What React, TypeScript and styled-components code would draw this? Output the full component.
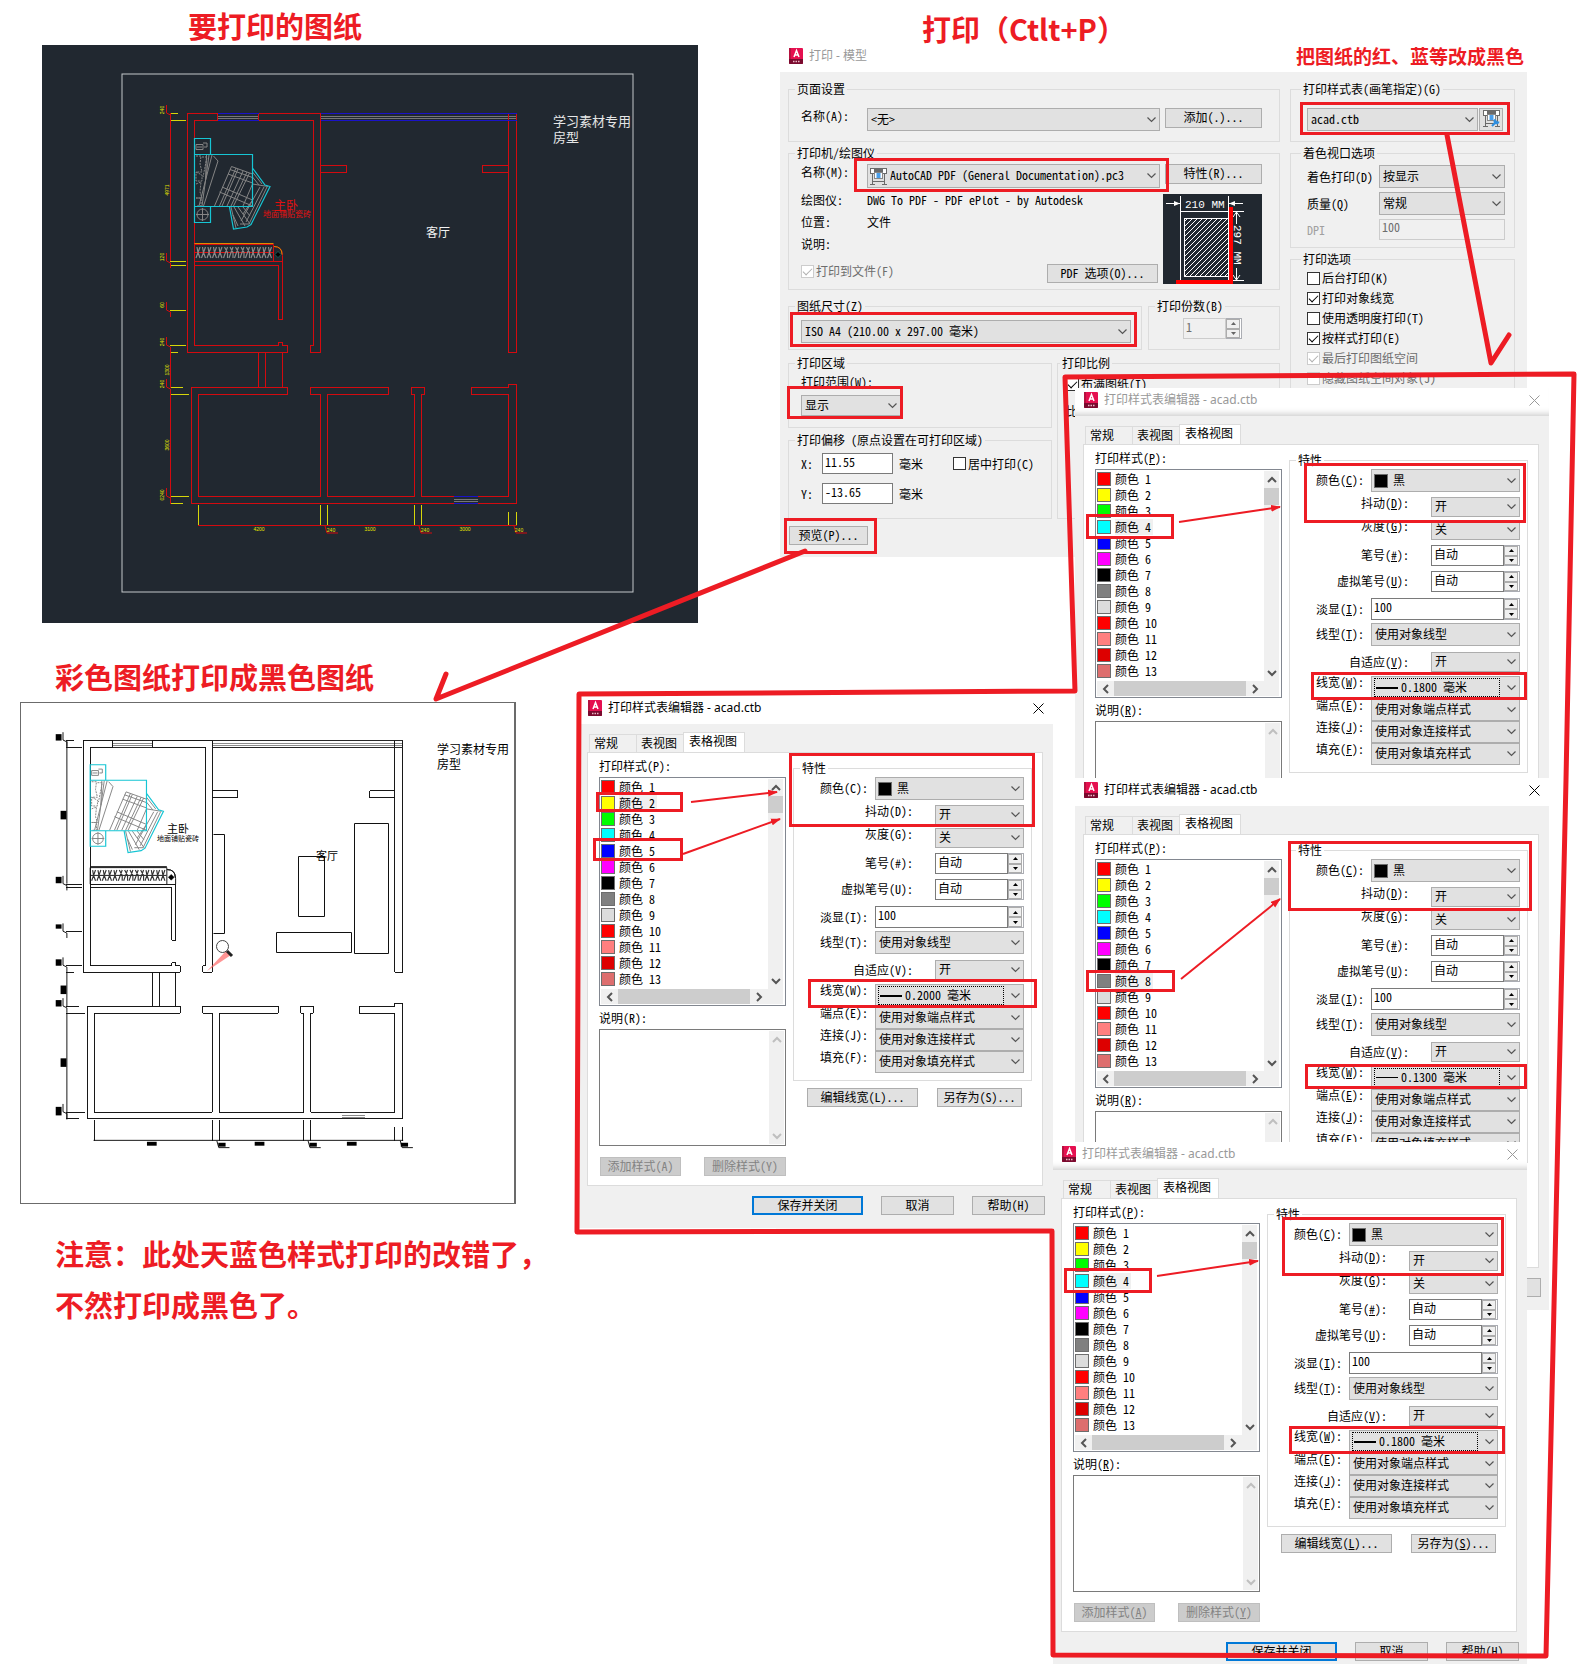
import React, { useId } from "react";
import styled, { createGlobalStyle, css } from "styled-components";

const cjk = `"Noto Sans CJK SC", sans-serif`;
const dialogFont = `"Noto Sans Mono CJK SC", ${cjk}`;
const RED = "#ed1c24";

const GlobalStyle = createGlobalStyle`
  *, *::before, *::after { box-sizing: border-box; }
  body { margin: 0; background: #fff; }
  button, input, select, textarea { font: inherit; color: inherit; margin: 0; border-radius: 0; }
`;

/* ---------- canvas ---------- */

const Board = styled.main`
  position: relative;
  width: 100%;
  height: max(100vh, 1664px);
  overflow: hidden;
  background: #fff;
  font-family: ${dialogFont};
  font-size: 12px;
  line-height: 14px;
  color: #000;
`;

const DrawingColumn = styled.section`
  display: flex;
  flex-direction: column;
  align-items: flex-start;
  padding-top: 7px;
`;

const Heading = styled.h2<{ $size?: number }>`
  margin: 0;
  font-family: ${cjk};
  font-size: ${(p) => p.$size ?? 29}px;
  font-weight: 700;
  line-height: 36px;
  color: ${RED};
  white-space: nowrap;
`;

const TopHeading = styled(Heading)`
  padding-left: 188px;
`;

const ResultHeading = styled(Heading)`
  margin-top: 35px;
  padding-left: 55px;
`;

const FloatingHeading = styled(Heading)<{ $x: number; $y: number }>`
  position: absolute;
  left: ${(p) => p.$x}px;
  top: ${(p) => p.$y}px;
`;

const Warning = styled.p`
  margin: 24px 0 0 55px;
  font-family: ${cjk};
  font-size: 29px;
  font-weight: 700;
  line-height: 51px;
  color: ${RED};
`;

const ModelSpace = styled.figure`
  margin: 2px 0 0 42px;
  width: 656px;
  background: #212830;
  svg { display: block; }
`;

const PaperSpace = styled.figure`
  margin: 8px 0 0 20px;
  width: 496px;
  border: 1px solid #6b6b6b;
  border-right-width: 2px;
  svg { display: block; }
`;

const Overlay = styled.svg`
  position: absolute;
  left: 0;
  top: 0;
  pointer-events: none;
`;

/* ---------- windows ---------- */

const WindowFrame = styled.section<{ $x: number; $y: number; $w: number; $visible?: number }>`
  position: absolute;
  left: ${(p) => p.$x}px;
  top: ${(p) => p.$y}px;
  width: ${(p) => p.$w}px;
  display: flex;
  flex-direction: column;
  background: #f0f0f0;
  ${(p) => p.$visible && css`max-height: ${p.$visible}px; overflow: hidden;`}
`;

const TitleBar = styled.header<{ $inactive?: boolean; $shadow?: boolean }>`
  display: flex;
  flex: none;
  align-items: center;
  gap: 6px;
  height: 28px;
  padding: 0 9px 4px;
  background: #fff;
  color: ${(p) => (p.$inactive ? "#999" : "#000")};
  font-family: "Noto Sans", ${cjk};
  font-size: 12px;
  ${(p) => p.$shadow && css`box-shadow: inset 0 -8px 6px -6px #ccc;`}
`;

const TitleText = styled.h3`
  flex: 1;
  margin: 0;
  font-size: 12px;
  font-weight: 400;
  line-height: 16px;
`;

const CloseButton = styled.button`
  display: flex;
  padding: 0;
  border: 0;
  background: none;
`;

/* ---------- controls ---------- */

const Button = styled.button<{ $w?: number; $h?: number; $primary?: boolean }>`
  flex: none;
  width: ${(p) => (p.$w ? `${p.$w}px` : "auto")};
  height: ${(p) => p.$h ?? 19}px;
  padding: 0 0 2px;
  border: ${(p) => (p.$primary ? "2px solid #0078d7" : "1px solid #adadad")};
  background: #e1e1e1;
  line-height: 14px;
  white-space: nowrap;
  &:disabled {
    background: #ccc;
    border-color: #bfbfbf;
    color: #838383;
  }
`;

const SelectWrap = styled.span<{ $w?: number; $h: number }>`
  position: relative;
  display: block;
  flex: none;
  width: ${(p) => (p.$w ? `${p.$w}px` : "100%")};
  height: ${(p) => p.$h}px;
`;

const NativeSelect = styled.select<{ $indent: number }>`
  appearance: none;
  display: block;
  width: 100%;
  height: 100%;
  padding: 0 18px 2px ${(p) => p.$indent}px;
  border: 1px solid #adadad;
  background: #e1e1e1;
  line-height: 14px;
`;

const SelectChevron = styled.svg`
  position: absolute;
  right: 4px;
  top: 50%;
  margin-top: -3px;
  pointer-events: none;
`;

const SelectAdornment = styled.span`
  position: absolute;
  inset: 2px 20px 2px 3px;
  display: flex;
  align-items: center;
  pointer-events: none;
`;

const FocusRing = styled(SelectAdornment)`
  border: 1px dotted #000;
`;

const Swatch = styled.span<{ $color: string }>`
  flex: none;
  width: 14px;
  height: 14px;
  border: 1px solid #6d6d6d;
  background: ${(p) => p.$color};
`;

const StrokeSample = styled.span<{ $weight: number }>`
  width: 22px;
  height: ${(p) => p.$weight}px;
  margin-left: 1px;
  background: #000;
`;

const TextInput = styled.input<{ $w?: number; $h?: number; $top?: boolean }>`
  display: block;
  min-width: 0;
  flex: ${(p) => (p.$w ? "none" : "1")};
  width: ${(p) => (p.$w ? `${p.$w}px` : "auto")};
  height: ${(p) => p.$h ?? 21}px;
  padding: 0 2px ${(p) => (p.$top ? 6 : 4)}px 2px;
  border: 1px solid #7a7a7a;
  background: #fff;
  line-height: 14px;
  &:disabled {
    border-color: #ccc;
    background: #f0f0f0;
    color: #6d6d6d;
  }
`;

const SpinWrap = styled.span<{ $w: number }>`
  display: flex;
  flex: none;
  width: ${(p) => p.$w}px;
`;

const SpinButtons = styled.span`
  display: flex;
  flex-direction: column;
  width: 16px;
  padding: 0 1px 0 0;
  border: 1px solid #abadb3;
  border-left: 0;
  background: #fff;
`;

const SpinButton = styled.button`
  flex: 1;
  display: flex;
  align-items: center;
  justify-content: center;
  padding: 0;
  border: 1px solid #adadad;
  background: #f0f0f0;
`;

const CheckLabel = styled.label<{ $disabled?: boolean }>`
  display: flex;
  align-items: center;
  gap: 2px;
  height: 14px;
  white-space: nowrap;
  color: ${(p) => (p.$disabled ? "#6d6d6d" : "#000")};
`;

const CheckBox = styled.input`
  appearance: none;
  flex: none;
  width: 13px;
  height: 13px;
  border: 1px solid #333;
  background: #fff;
  &:checked::after {
    content: "";
    display: block;
    width: 9px;
    height: 5px;
    margin: 2px 0 0 1px;
    border-left: 1px solid currentColor;
    border-bottom: 1px solid currentColor;
    transform: rotate(-45deg);
  }
  &:disabled {
    border-color: #ccc;
    color: #b0b0b0;
  }
`;

const Group = styled.fieldset<{ $pad: string; $mt?: number; $w?: number; $grow?: boolean }>`
  min-width: 0;
  margin: ${(p) => p.$mt ?? 0}px 0 0;
  padding: ${(p) => p.$pad};
  border: 1px solid #dcdcdc;
  ${(p) => p.$w && css`width: ${p.$w}px; flex: none;`}
  ${(p) => p.$grow && css`flex: 1;`}
`;

const Legend = styled.legend`
  margin-left: -6px;
  padding: 0 2px;
  line-height: 14px;
  white-space: nowrap;
`;

/* ---------- drawings ---------- */

const AppIcon = () => (
  <svg width="14" height="16" viewBox="0 0 14 16" aria-hidden="true">
    <rect x="0" y="0" width="14" height="16" rx="1" fill="#e51050" />
    <path d="M0 0h2v11h-2z" fill="#b5123f" />
    <path d="M0 11h14v4a1 1 0 0 1-1 1h-12a1 1 0 0 1-1-1z" fill="#7a0a2e" />
    <path d="M5 9 7.500 2.500 10 9M6 7h3" fill="none" stroke="#fff" strokeWidth="1.500" />
    <path d="M4 13.500h1.500M6.500 13.500h1.500M9 13.500h1.500" stroke="#e9b9c6" strokeWidth="1.500" />
  </svg>
);

const CloseIcon = () => (
  <svg width="11" height="11" viewBox="0 0 11 11" aria-hidden="true">
    <path d="M.5.5l10 10M10.500.5l-10 10" stroke="currentColor" fill="none" />
  </svg>
);

const PlotterIcon = ({ edit = false }: { edit?: boolean }) => (
  <svg width="17" height="17" viewBox="0 0 17 17" aria-hidden="true">
    <rect x="0.500" y="0.500" width="16" height="5" fill="#fff" stroke="#6a6a6a" />
    <rect x="4" y="0" width="9" height="4" fill="#6a6a6a" />
    <path d="M2.500 6v10M14.500 6v10M0 16.500h5M12 16.500h5M3 13.500h11" stroke="#6a6a6a" fill="none" />
    <rect x="4.500" y="4.500" width="8" height="6" fill="#fff" stroke="#888" />
    <rect x="6.500" y="5" width="4" height="5" fill="#4b9fea" />
    {edit && (
      <path d="M9 16l5-5M12.500 9.500a2 2 0 1 0 3 2" stroke="#2f8fe0" strokeWidth="2" fill="none" />
    )}
  </svg>
);

const Chevron = () => (
  <SelectChevron width="9" height="6" viewBox="0 0 9 6" aria-hidden="true">
    <path d="M.5.5l4 4 4-4" fill="none" stroke="#555" strokeWidth="1.200" />
  </SelectChevron>
);

const arrowPaths = {
  up: "M1 7l4-4 4 4",
  down: "M1 3l4 4 4-4",
  left: "M7 1l-4 4 4 4",
  right: "M3 1l4 4-4 4",
};

const ScrollArrow = ({ dir, muted }: { dir: keyof typeof arrowPaths; muted?: boolean }) => (
  <svg width="10" height="10" viewBox="0 0 10 10" aria-hidden="true">
    <path d={arrowPaths[dir]} fill="none" stroke={muted ? "#bfbfbf" : "#555"} strokeWidth="2" />
  </svg>
);

/* ---------- control helpers ---------- */

const Mnemonic = ({ text, on }: { text: string; on: boolean }) => {
  const m = on ? text.match(/^(.*\()(.)(\).*)$/) : null;
  return m ? <>{m[1]}<u>{m[2]}</u>{m[3]}</> : <>{text}</>;
};

type SelectProps = {
  id?: string;
  label?: string;
  value: string;
  w?: number;
  h?: number;
  indent?: number;
  children?: React.ReactNode;
};

const Select = ({ id, label, value, w, h = 23, indent = 3, children }: SelectProps) => (
  <SelectWrap $w={w} $h={h}>
    <NativeSelect id={id} aria-label={label} $indent={indent} defaultValue={value}>
      <option>{value}</option>
    </NativeSelect>
    {children}
    <Chevron />
  </SelectWrap>
);

type SpinProps = { id?: string; label?: string; value: string; w: number; h?: number; top?: boolean; disabled?: boolean };

const Spin = ({ id, label, value, w, h = 21, top, disabled }: SpinProps) => (
  <SpinWrap $w={w}>
    <TextInput id={id} aria-label={label} $h={h} $top={top} defaultValue={value} disabled={disabled} />
    <SpinButtons>
      <SpinButton aria-label="+" disabled={disabled}>
        <svg width="5" height="3" viewBox="0 0 5 3"><path d="M0 3l2.500-3 2.500 3z" fill={disabled ? "#666" : "#000"} /></svg>
      </SpinButton>
      <SpinButton aria-label="-" disabled={disabled}>
        <svg width="5" height="3" viewBox="0 0 5 3"><path d="M0 0l2.500 3 2.500-3z" fill={disabled ? "#666" : "#000"} /></svg>
      </SpinButton>
    </SpinButtons>
  </SpinWrap>
);

const Check = ({ text, checked, disabled }: { text: string; checked?: boolean; disabled?: boolean }) => (
  <CheckLabel $disabled={disabled}>
    <CheckBox type="checkbox" defaultChecked={checked} disabled={disabled} />
    {text}
  </CheckLabel>
);

/* ---------- plot style editor ---------- */

const EditorBody = styled.div`
  display: flex;
  flex: none;
  flex-direction: column;
  height: 504px;
  padding: 8px 8px 0;
`;

const Tabs = styled.nav`
  display: flex;
  align-items: flex-end;
  height: 21px;
  padding-left: 2px;
  margin-bottom: -1px;
`;

const Tab = styled.button<{ $active?: boolean }>`
  width: ${(p) => (p.$active ? 62 : 48)}px;
  height: ${(p) => (p.$active ? 21 : 19)}px;
  padding: 0 0 ${(p) => (p.$active ? 4 : 2)}px ${(p) => (p.$active ? 5 : 4)}px;
  border: 1px solid #dcdcdc;
  border-bottom: ${(p) => (p.$active ? "0" : "1px solid #dcdcdc")};
  margin-right: ${(p) => (p.$active ? 0 : -1)}px;
  background: ${(p) => (p.$active ? "#fff" : "#f0f0f0")};
  text-align: left;
  white-space: nowrap;
`;

const TabPage = styled.div`
  display: flex;
  gap: 7px;
  width: 456px;
  height: 434px;
  padding: 6px 10px 0 11px;
  border: 1px solid #dcdcdc;
  background: #fff;
`;

const StylesColumn = styled.div`
  display: flex;
  flex-direction: column;
  flex: none;
  width: 187px;
`;

const PropsColumn = styled.div`
  display: flex;
  flex-direction: column;
  flex: 1;
`;

const FieldCaption = styled.label`
  display: block;
  line-height: 14px;
`;

const StyleList = styled.div`
  display: grid;
  grid-template-columns: 1fr 15px;
  grid-template-rows: 210px 15px;
  height: 229px;
  margin: 4px 0 5px;
  padding: 1px 2px 0 1px;
  border: 1px solid #828790;
`;

const StyleItems = styled.ul`
  margin: 0;
  padding: 0;
  list-style: none;
`;

const StyleItem = styled.li`
  display: flex;
  align-items: center;
  gap: 4px;
  height: 16px;
`;

const StyleName = styled.span<{ $selected: boolean }>`
  padding-right: 2px;
  line-height: 16px;
  background: ${(p) => (p.$selected ? "#f0f0f0" : "none")};
`;

const VerticalBar = styled.div`
  display: flex;
  flex-direction: column;
  justify-content: space-between;
  background: #f0f0f0;
`;

const HorizontalBar = styled.div`
  grid-column: 1 / -1;
  display: flex;
  padding-right: 16px;
  background: #f0f0f0;
`;

const BarButton = styled.button`
  display: flex;
  align-items: center;
  justify-content: center;
  flex: none;
  width: 17px;
  height: 17px;
  padding: 0;
  border: 0;
  background: none;
`;

const VerticalBarButton = styled(BarButton)`
  width: 15px;
`;

const HorizontalBarButton = styled(BarButton)`
  height: 15px;
`;

const VerticalThumb = styled.div`
  height: 17px;
  background: #cdcdcd;
  margin-bottom: auto;
`;

const HorizontalThumb = styled.div`
  flex: 1;
  background: #cdcdcd;
`;

const NoteBox = styled.div`
  display: flex;
  height: 117px;
  margin: 4px 0 11px;
  padding: 1px;
  border: 1px solid #7a7a7a;
`;

const NoteText = styled.textarea`
  flex: 1;
  min-width: 0;
  padding: 2px;
  border: 0;
  resize: none;
  overflow: hidden;
`;

const SplitRow = styled.div<{ $pad?: string }>`
  display: flex;
  justify-content: space-between;
  padding: ${(p) => p.$pad ?? "0"};
`;

const PropRow = styled.div<{ $mt: number; $h: number; $top?: boolean }>`
  display: flex;
  justify-content: flex-end;
  align-items: ${(p) => (p.$top ? "flex-start" : "center")};
  height: ${(p) => p.$h}px;
  margin-top: ${(p) => p.$mt}px;
`;

const PropLabel = styled.label<{ $narrow?: boolean }>`
  padding-right: ${(p) => (p.$narrow ? 22 : 7)}px;
  padding-bottom: 1px;
  line-height: 12px;
  white-space: nowrap;
`;

const Footer = styled.footer`
  display: flex;
  justify-content: flex-end;
  padding-top: 10px;
`;

const FooterButton = styled(Button)`
  margin-left: ${(p) => (p.$primary ? 0 : 18)}px;
`;

const COLORS = [
  "#ff0000", "#ffff00", "#00ff00", "#00ffff", "#0000ff", "#ff00ff", "#000000",
  "#808080", "#dcdcdc", "#ff0000", "#ff7f7f", "#dd0000", "#dd6e6e",
];

type PropSpec = {
  label: string;
  value: string;
  kind?: "spin" | "color" | "weight";
  narrow?: boolean;
  top?: boolean;
  mt: number;
  h: number;
};

const PROPS: PropSpec[] = [
  { label: "颜色(C):", value: "黑", kind: "color", mt: 2, h: 23 },
  { label: "抖动(D):", value: "开", narrow: true, top: true, mt: 5, h: 20 },
  { label: "灰度(G):", value: "关", narrow: true, top: true, mt: 3, h: 20 },
  { label: "笔号(#):", value: "自动", kind: "spin", narrow: true, mt: 5, h: 21 },
  { label: "虚拟笔号(U):", value: "自动", kind: "spin", narrow: true, mt: 5, h: 21 },
  { label: "淡显(I):", value: "100", kind: "spin", mt: 6, h: 22 },
  { label: "线型(T):", value: "使用对象线型", mt: 3, h: 23 },
  { label: "自适应(V):", value: "开", narrow: true, mt: 6, h: 20 },
  { label: "线宽(W):", value: "", kind: "weight", top: true, mt: 4, h: 23 },
  { label: "端点(E):", value: "使用对象端点样式", top: true, mt: 0, h: 22 },
  { label: "连接(J):", value: "使用对象连接样式", top: true, mt: 0, h: 22 },
  { label: "填充(F):", value: "使用对象填充样式", top: true, mt: 0, h: 22 },
];

type EditorProps = {
  x: number;
  y: number;
  selected: number;
  weight: string;
  sample?: number;
  visible?: number;
  inactive?: boolean;
  mnemonics?: boolean;
};

const StyleEditor = ({ x, y, selected, weight, sample = 2, visible, inactive, mnemonics = true }: EditorProps) => {
  const id = useId();
  return (
    <WindowFrame $x={x} $y={y} $w={474} $visible={visible}>
      <TitleBar $inactive={inactive} $shadow={inactive}>
        <AppIcon />
        <TitleText>打印样式表编辑器 - acad.ctb</TitleText>
        <CloseButton aria-label="关闭"><CloseIcon /></CloseButton>
      </TitleBar>
      <EditorBody>
        <Tabs>
          <Tab>常规</Tab>
          <Tab>表视图</Tab>
          <Tab $active>表格视图</Tab>
        </Tabs>
        <TabPage>
          <StylesColumn>
            <FieldCaption as="span"><Mnemonic text="打印样式(P):" on={mnemonics} /></FieldCaption>
            <StyleList>
              <StyleItems>
                {COLORS.map((c, i) => (
                  <StyleItem key={i}>
                    <Swatch $color={c} />
                    <StyleName $selected={i + 1 === selected}>颜色 {i + 1}</StyleName>
                  </StyleItem>
                ))}
              </StyleItems>
              <VerticalBar>
                <VerticalBarButton aria-label="向上"><ScrollArrow dir="up" /></VerticalBarButton>
                <VerticalThumb />
                <VerticalBarButton aria-label="向下"><ScrollArrow dir="down" /></VerticalBarButton>
              </VerticalBar>
              <HorizontalBar>
                <HorizontalBarButton aria-label="向左"><ScrollArrow dir="left" /></HorizontalBarButton>
                <HorizontalThumb />
                <HorizontalBarButton aria-label="向右"><ScrollArrow dir="right" /></HorizontalBarButton>
              </HorizontalBar>
            </StyleList>
            <FieldCaption htmlFor={`${id}-note`}><Mnemonic text="说明(R):" on={mnemonics} /></FieldCaption>
            <NoteBox>
              <NoteText id={`${id}-note`} />
              <VerticalBar>
                <VerticalBarButton disabled aria-label="向上"><ScrollArrow dir="up" muted /></VerticalBarButton>
                <VerticalBarButton disabled aria-label="向下"><ScrollArrow dir="down" muted /></VerticalBarButton>
              </VerticalBar>
            </NoteBox>
            <SplitRow $pad="0 0 0 1px">
              <Button disabled $w={81}><Mnemonic text="添加样式(A)" on={mnemonics} /></Button>
              <Button disabled $w={82}><Mnemonic text="删除样式(Y)" on={mnemonics} /></Button>
            </SplitRow>
          </StylesColumn>
          <PropsColumn>
            <Group $pad="0 7px 7px 12px" $mt={2}>
              <Legend>特性</Legend>
              {PROPS.map((p, i) => {
                const fieldId = `${id}-${i}`;
                const w = p.narrow ? 89 : 149;
                return (
                  <PropRow key={p.label} $mt={p.mt} $h={p.h} $top={p.top}>
                    <PropLabel htmlFor={fieldId} $narrow={p.narrow}>
                      <Mnemonic text={p.label} on={mnemonics} />
                    </PropLabel>
                    {p.kind === "spin" ? (
                      <Spin id={fieldId} value={p.value} w={w} h={p.h} top={!p.narrow} />
                    ) : p.kind === "color" ? (
                      <Select id={fieldId} value={p.value} w={w} h={p.h} indent={21}>
                        <SelectAdornment><Swatch $color="#000" /></SelectAdornment>
                      </Select>
                    ) : p.kind === "weight" ? (
                      <Select id={fieldId} value={`${weight} 毫米`} w={w} h={p.h} indent={29}>
                        <FocusRing><StrokeSample $weight={sample} /></FocusRing>
                      </Select>
                    ) : (
                      <Select id={fieldId} value={p.value} w={w} h={p.h} />
                    )}
                  </PropRow>
                );
              })}
            </Group>
            <SplitRow $pad="7px 10px 0 14px">
              <Button $w={111}><Mnemonic text="编辑线宽(L)..." on={mnemonics} /></Button>
              <Button $w={85}><Mnemonic text="另存为(S)..." on={mnemonics} /></Button>
            </SplitRow>
          </PropsColumn>
        </TabPage>
        <Footer>
          <FooterButton $primary $w={111}>保存并关闭</FooterButton>
          <FooterButton $w={73}>取消</FooterButton>
          <FooterButton $w={73}>帮助(H)</FooterButton>
        </Footer>
      </EditorBody>
    </WindowFrame>
  );
};

/* ---------- print dialog ---------- */

const PrintBody = styled.div`
  display: flex;
  gap: 10px;
  padding: 10px 12px 12px 8px;
`;

const PrintTitle = styled(TitleBar)`
  height: 32px;
  padding-bottom: 0;
`;

const MainColumn = styled.div`
  display: flex;
  flex-direction: column;
  flex: 1;
  min-width: 0;
`;

const SideColumn = styled.div`
  display: flex;
  flex-direction: column;
  flex: none;
  width: 225px;
`;

const FieldRow = styled.div<{ $gap?: number; $mt?: number; $top?: boolean }>`
  display: flex;
  align-items: ${(p) => (p.$top ? "flex-start" : "center")};
  gap: ${(p) => p.$gap ?? 0}px;
  margin-top: ${(p) => p.$mt ?? 0}px;
`;

const RowLabel = styled.label<{ $w: number }>`
  flex: none;
  width: ${(p) => p.$w}px;
  white-space: nowrap;
`;

const TopLabel = styled(RowLabel)`
  padding-top: 1px;
`;

const SideButton = styled(Button)`
  margin-left: 5px;
`;

const PrinterDetails = styled.div`
  display: flex;
  gap: 5px;
  margin-top: 6px;
`;

const DetailColumn = styled.div`
  flex: 1;
  display: flex;
  flex-direction: column;
`;

const Facts = styled.dl`
  display: grid;
  grid-template-columns: 66px 1fr;
  row-gap: 10px;
  margin: 0;
  line-height: 12px;
`;

const FactName = styled.dt``;

const FactValue = styled.dd`
  margin: 0;
`;

const ActionRow = styled.div`
  display: flex;
  justify-content: space-between;
  margin-top: 14px;
`;

const SplitGroups = styled.div<{ $gap: number; $mt: number }>`
  display: flex;
  gap: ${(p) => p.$gap}px;
  margin-top: ${(p) => p.$mt}px;
`;

const GroupStack = styled.div`
  flex: none;
  width: 264px;
`;

const CopiesField = styled.div`
  display: flex;
  justify-content: flex-end;
`;

const ViewportGrid = styled.div`
  display: grid;
  grid-template-columns: 72px 126px;
  row-gap: 4px;
  align-items: center;
`;

const OptionList = styled.div<{ $gap: number }>`
  display: flex;
  flex-direction: column;
  gap: ${(p) => p.$gap}px;
`;

const MutedLabel = styled.label`
  color: #a0a0a0;
`;

const PreviewRow = styled.div`
  padding: 7px 0 0 1px;
`;

const IconButton = styled(Button)`
  display: flex;
  align-items: center;
  justify-content: center;
`;

const PagePreview = () => {
  const hatch = [];
  for (let i = -60; i < 44; i += 5) hatch.push(`M${21 + i} 83l60-60`);
  return (
    <svg width="99" height="90" viewBox="0 0 99 90" role="img" aria-label="210 × 297 MM">
      <defs>
        <clipPath id="printable"><rect x="22" y="25" width="43" height="57" /></clipPath>
      </defs>
      <rect width="99" height="90" fill="#212830" />
      <g stroke="#fff" fill="none">
        <path d={hatch.join("")} clipPath="url(#printable)" />
        <rect x="21.500" y="24.500" width="44" height="58" />
        <rect x="17.500" y="17.500" width="48" height="69" />
        <path d="M17.500 2v15M65.500 2v15M3 9.500h14M66 9.500h14M66 17.500h15M66 86.500h15M73.500 18v12M73.500 74v12M70 23l3.500-5 3.500 5M70 81l3.500 5 3.500-5" />
      </g>
      <path d="M11 7l6 2.500-6 2.500zM72 7l-6 2.500 6 2.500z" fill="#fff" />
      <text x="22" y="14" fill="#fff" fontSize="11" fontFamily="Liberation Mono, monospace">210 MM</text>
      <text transform="translate(71 31) rotate(90)" fill="#fff" fontSize="11" fontFamily="Liberation Mono, monospace">297 MM</text>
      <path d="M66 13h4v77h-57v-4h53z" fill="#f00" />
    </svg>
  );
};

const PrintDialog = () => {
  const id = useId();
  return (
    <WindowFrame $x={780} $y={40} $w={747}>
      <PrintTitle $inactive>
        <AppIcon />
        <TitleText>打印 - 模型</TitleText>
      </PrintTitle>
      <PrintBody>
        <MainColumn>
          <Group $pad="12px 12px 10px">
            <Legend>页面设置</Legend>
            <FieldRow $top>
              <TopLabel $w={66} htmlFor={`${id}-page`}>名称(A):</TopLabel>
              <Select id={`${id}-page`} value="<无>" w={293} />
              <SideButton $w={97} $h={20}>添加(.)...</SideButton>
            </FieldRow>
          </Group>
          <Group $pad="4px 17px 5px 12px" $mt={4}>
            <Legend>打印机/绘图仪</Legend>
            <FieldRow $top>
              <TopLabel $w={66} htmlFor={`${id}-printer`}>名称(M):</TopLabel>
              <Select id={`${id}-printer`} value="AutoCAD PDF (General Documentation).pc3" w={293} h={24} indent={22}>
                <SelectAdornment><PlotterIcon /></SelectAdornment>
              </Select>
              <SideButton $w={97} $h={20}>特性(R)...</SideButton>
            </FieldRow>
            <PrinterDetails>
              <DetailColumn>
                <Facts>
                  <FactName>绘图仪:</FactName><FactValue>DWG To PDF - PDF ePlot - by Autodesk</FactValue>
                  <FactName>位置:</FactName><FactValue>文件</FactValue>
                  <FactName>说明:</FactName><FactValue />
                </Facts>
                <ActionRow>
                  <Check text="打印到文件(F)" checked disabled />
                  <Button $w={111}>PDF 选项(O)...</Button>
                </ActionRow>
              </DetailColumn>
              <PagePreview />
            </PrinterDetails>
          </Group>
          <SplitGroups $gap={6} $mt={9}>
            <Group $pad="7px 10px 6px 12px" $grow>
              <Legend>图纸尺寸(Z)</Legend>
              <Select label="图纸尺寸(Z)" value="ISO A4 (210.00 x 297.00 毫米)" />
            </Group>
            <Group $pad="5px 37px 6px 12px" $w={132}>
              <Legend>打印份数(B)</Legend>
              <CopiesField>
                <Spin label="打印份数(B)" value="1" w={59} disabled />
              </CopiesField>
            </Group>
          </SplitGroups>
          <SplitGroups $gap={5} $mt={6}>
            <GroupStack>
              <Group $pad="5px 12px 11px">
                <Legend>打印区域</Legend>
                <FieldCaption htmlFor={`${id}-area`}>打印范围(W):</FieldCaption>
                <FieldRow $mt={6}>
                  <Select id={`${id}-area`} value="显示" w={100} h={21} />
                </FieldRow>
              </Group>
              <Group $pad="6px 12px 14px" $mt={5}>
                <Legend>打印偏移 (原点设置在可打印区域)</Legend>
                <FieldRow>
                  <RowLabel $w={21} htmlFor={`${id}-x`}>X:</RowLabel>
                  <FieldRow $gap={6}>
                    <TextInput id={`${id}-x`} $w={71} defaultValue="11.55" />
                    <span>毫米</span>
                  </FieldRow>
                  <FieldRow $gap={30}><span /><Check text="居中打印(C)" /></FieldRow>
                </FieldRow>
                <FieldRow $mt={9}>
                  <RowLabel $w={21} htmlFor={`${id}-y`}>Y:</RowLabel>
                  <FieldRow $gap={6}>
                    <TextInput id={`${id}-y`} $w={71} defaultValue="-13.65" />
                    <span>毫米</span>
                  </FieldRow>
                </FieldRow>
              </Group>
            </GroupStack>
            <Group $pad="7px 8px" $grow>
              <Legend>打印比例</Legend>
              <OptionList $gap={13}>
                <Check text="布满图纸(I)" checked />
                <span>比例(S):</span>
              </OptionList>
            </Group>
          </SplitGroups>
          <PreviewRow><Button $w={79}>预览(P)...</Button></PreviewRow>
        </MainColumn>
        <SideColumn>
          <Group $pad="12px 11px 10px 16px">
            <Legend>打印样式表(画笔指定)(G)</Legend>
            <FieldRow $gap={1}>
              <Select label="打印样式表(画笔指定)(G)" value="acad.ctb" w={171} />
              <IconButton $w={24} $h={23} aria-label="编辑"><PlotterIcon edit /></IconButton>
            </FieldRow>
          </Group>
          <Group $pad="5px 9px 7px 16px" $mt={4}>
            <Legend>着色视口选项</Legend>
            <ViewportGrid>
              <label htmlFor={`${id}-shade`}>着色打印(D)</label>
              <Select id={`${id}-shade`} value="按显示" />
              <label htmlFor={`${id}-quality`}>质量(Q)</label>
              <Select id={`${id}-quality`} value="常规" />
              <MutedLabel htmlFor={`${id}-dpi`}>DPI</MutedLabel>
              <TextInput id={`${id}-dpi`} defaultValue="100" disabled $w={126} $top />
            </ViewportGrid>
          </Group>
          <Group $pad="5px 9px 7px 16px" $mt={4} $grow>
            <Legend>打印选项</Legend>
            <OptionList $gap={6}>
              <Check text="后台打印(K)" />
              <Check text="打印对象线宽" checked />
              <Check text="使用透明度打印(T)" />
              <Check text="按样式打印(E)" checked />
              <Check text="最后打印图纸空间" checked disabled />
              <Check text="隐藏图纸空间对象(J)" disabled />
            </OptionList>
          </Group>
        </SideColumn>
      </PrintBody>
    </WindowFrame>
  );
};

/* ---------- floor plan ---------- */

const WALLS = [
  "M217.500 113.500H187.500V352.500H287.500V345.500H282.500V342.500H278.500V345.500H194.500V120.500H217.500z",
  "M258.500 113.500H320.500V352.500H310.500V345.500H313.500V120.500H258.500z",
  "M508.500 113.500V352.500H516.500V113.500",
  "M320.500 165.500H346.500V172.500H320.500M508.500 165.500H482.500V172.500H508.500",
  "M194.500 261.500H282.500V319.500H278.500V265.500H194.500",
  "M258.500 352.500V387.500M265.500 352.500V387.500M282.500 352.500V387.500",
  "M453.500 503.500H191.500V387.500H287.500V394.500H198.500V496.500H320.500V394.500H310.500V387.500H388.500V394.500H327.500V496.500H414.500V394.500H411.500V387.500H424.500V394.500H421.500V496.500H453.500",
  "M477.500 496.500H508.500V394.500H471.500V387.500H508.500V384.500H516.500V503.500H453.500",
].join("");

const BLUE_LINES = "M217.500 113.500H258.500M217.500 120.500H258.500M320.500 113.500H516.500M320.500 120.500H516.500M453.500 496.500H477.500M453.500 503.500H477.500";
const PANE_LINES = "M217.500 116.500H258.500M217.500 118.500H258.500M320.500 116.500H516.500M320.500 118.500H516.500M453.500 499.500H477.500M453.500 501.500H477.500";
const DIM_LINES =
  "M170.500 113V261M170.500 352V388M170.500 394V504M198 525.500H517" +
  [113, 261, 310, 345, 387, 496].map((y) => `M166.500 ${y - 8}V${y}L170.500 ${y + 2}V${y + 7}`).join("") +
  [325, 419, 514].map((x) => `M${x} 526l2 7h11`).join("");
const TICKS =
  "M170 113.500H178M170 120.500H186M170 261.500H186M170 265.500H186M170 310.500H186M170 345.500H186M170 352.500H178M170 387.500H183M170 394.500H189M170 496.500H189M170 503.500H183" +
  "M198.500 505V526M320.500 505V526M327.500 505V526M414.500 505V526M421.500 505V526M508.500 512V526M516.500 512V526";

const DIM_TEXT: [number, number, string, boolean][] = [
  [162, 110, "240", true], [167, 190, "4971", true], [162, 257, "120", true], [162, 305, "60", true],
  [162, 342, "240", true], [167, 370, "1300", true], [162, 384, "240", true], [167, 445, "3600", true],
  [162, 495, "0240", true], [259, 529, "4200", false], [331, 530, "240", false], [370, 529, "3100", false],
  [425, 530, "240", false], [465, 529, "3000", false], [519, 530, "240", false],
];

const BLANKET = [
  "M231.500 166.500L252.500 174M230 169.500L252.500 177.500M228 174L252.500 183M222 187L252.500 200M219.500 192L252.500 206",
  "M231.500 166.500L214.500 206M236 168L219.500 206M238 169L222 206M243 171L227 206M247 172L231 206M249.500 173L233.500 206M252.500 184L243 206",
  "M213.500 156L218 161L203.500 206M209 155L202 206M212 155L199 206M206.500 155L205.500 180",
  "M252.500 172L262 184M252.500 177L259 185M252.500 184L268 186.500M267 187L249 224M264 187L246 222M260 187L241 221M252.500 200L243 214",
  "M231 207L236 228M234 207L245 226M238 207L250 224M243 207L250 216M233 215L238 226M240 224L249 224",
].join("");

const RODS = Array.from({ length: 14 }, (_, i) => {
  const x = 197 + i * 5.5;
  const s = i > 4 && i < 10 ? 3 : 1;
  return `M${x} 247l${s} 5.500l${3 - s} 5.500M${x + 3} 247l-2 5.500M${x - 1} 258l2-5.500`;
}).join("");

type PlanPalette = { wall: string; glass: string; pane: string; dim: string; tick: string; top: string; mid: string };

const PlanDrawing = ({ c, printed }: { c: PlanPalette; printed?: boolean }) => (
  <g fill="none" strokeWidth="1">
    <g shapeRendering="crispEdges">
      <path d={PANE_LINES} stroke={c.pane} />
      <path d={TICKS} stroke={c.tick} />
      <path d={WALLS} stroke={c.wall} />
      <path d={BLUE_LINES} stroke={c.glass} />
    </g>
    <path d={DIM_LINES} stroke={c.dim} />
    <path d={BLANKET} stroke="#858585" />
    <path d="M196 156h5l-1 8l2 8h-6M196 184l5 -2l-1 10l2 6h-6M202 157l5 0l-4 20M196 172l6 3v6h-6zM196 198h5v8h-5" stroke="#858585" strokeDasharray="2 1" />
    <path d="M196 144.500h7v5h-7zM197 147h5M203 143h4v4h-3" stroke="#858585" />
    <circle cx="202.500" cy="214.500" r="5.500" stroke="#858585" />
    <path d="M196 214.500h13M202.500 208v13" stroke="#858585" />
    <path d="M194.500 138.500h16v16h-16zM194.500 154.500h58v52h-58zM194.500 206.500h16v16h-16zM252.500 168L265 185L270 186.500L251 224.500L247 227L233.500 229L229.500 207" stroke="#16c5d4" strokeWidth="1.200" />
    <path d="M194.500 252.500H273" stroke={c.mid} />
    <path d={RODS} stroke={printed ? "#333" : "#8a8a8a"} strokeWidth="1.200" />
    <path d="M194.500 261.500V244.500H273.500V261.500M273.500 246.500q9 0 9 9v6" stroke={c.wall} />
    <path d="M194.500 243.500H273.500M274 246.500q8 0 8 8" stroke={c.top} />
    <path d="M275 254.500l3-3l3 3l-3 3z" fill="#000" stroke={printed ? "#000" : "#1a9a8a"} strokeWidth="0.500" />
    {DIM_TEXT.map(([x, y, t, vertical], i) =>
      printed ? (
        <rect
          key={i}
          x={vertical ? x - 3 : x - t.length * 1.5}
          y={vertical ? y - t.length : y - 2}
          width={vertical ? 6 : t.length * 2.5}
          height={vertical ? t.length * 2.2 : 4}
          fill="#000"
        />
      ) : (
        <text
          key={i}
          transform={`translate(${x} ${y})${vertical ? " rotate(-90)" : ""}`}
          fill="#e6e600"
          fontSize="5"
          fontFamily="Liberation Sans, sans-serif"
          textAnchor="middle"
          dominantBaseline="central"
        >
          {t}
        </text>
      )
    )}
  </g>
);

const PlanText = ({ x, y, size, fill, children }: { x: number; y: number; size: number; fill: string; children: string }) => (
  <text x={x} y={y} fontSize={size} fill={fill} fontFamily={`"Noto Sans CJK SC", sans-serif`} dominantBaseline="central">
    {children}
  </text>
);

const ModelPlan = () => (
  <svg width="656" height="578" viewBox="42 45 656 578">
    <rect x="122" y="74" width="511" height="518" fill="none" stroke="#c4c7ca" strokeWidth="1" />
    <PlanDrawing
      c={{ wall: "#d40a0f", glass: "#1a12c8", pane: "#777", dim: "#d40a0f", tick: "#d6d60a", top: "#e08a00", mid: "#e01010" }}
    />
    <PlanText x={553} y={120} size={13} fill="#e6e6e6">学习素材专用</PlanText>
    <PlanText x={553} y={136} size={13} fill="#e6e6e6">房型</PlanText>
    <PlanText x={426} y={231} size={12} fill="#f2f2f2">客厅</PlanText>
    <PlanText x={274} y={204} size={12} fill="#e01010">主卧</PlanText>
    <PlanText x={263} y={213} size={8} fill="#e01010">地面铺贴瓷砖</PlanText>
  </svg>
);

const PrintedPlan = () => (
  <svg width="492" height="500" viewBox="21 703 492 500">
    <g transform="translate(-98.600 630.300) scale(0.9706)">
      <PlanDrawing
        printed
        c={{ wall: "#111", glass: "#222", pane: "#888", dim: "#111", tick: "#111", top: "#111", mid: "#111" }}
      />
    </g>
    <g fill="none" stroke="#111">
      <path d="M213.500 834.500H224.500V933.500H213.500M298.500 856.500H324.500V916.500H298.500zM276.500 932.500H351.500V952.500H276.500zM354.500 823.500H388.500V953.500H354.500z" />
    </g>
    <path d="M207 971L226 951l5 4z" fill="#f66" opacity="0.700" />
    <circle cx="222.500" cy="946.500" r="6" fill="#fff" stroke="#444" />
    <path d="M227 951l5 5" stroke="#222" strokeWidth="3" />
    <PlanText x={437} y={748} size={12} fill="#000">学习素材专用</PlanText>
    <PlanText x={437} y={763} size={12} fill="#000">房型</PlanText>
    <PlanText x={316} y={855} size={11} fill="#000">客厅</PlanText>
    <PlanText x={167} y={828} size={11} fill="#000">主卧</PlanText>
    <PlanText x={157} y={838} size={7} fill="#000">地面铺贴瓷砖</PlanText>
  </svg>
);

/* ---------- red mark-up ---------- */

const BOXES: [number, number, number, number][] = [
  [856, 160, 311, 30], [1302, 104, 206, 29], [792, 314, 343, 31], [789, 388, 112, 29], [786, 520, 89, 32],
  [598, 794, 83, 16], [595, 840, 86, 19], [791, 755, 242, 70], [810, 981, 225, 25],
  [1088, 516, 84, 21], [1306, 465, 218, 56], [1313, 674, 212, 24],
  [1088, 972, 85, 18], [1290, 843, 240, 66], [1307, 1066, 218, 21],
  [1066, 1270, 84, 21], [1284, 1219, 218, 55], [1291, 1428, 212, 24],
];

const ARROWS: [number, number, number, number][] = [
  [691, 802, 777, 792], [683, 854, 780, 819], [1179, 522, 1280, 507],
  [1181, 979, 1280, 899], [1157, 1276, 1258, 1261],
];

const MarkUp = () => (
  <Overlay width="1596" height="1664" viewBox="0 0 1596 1664" fill="none" stroke={RED} aria-hidden="true">
    <defs>
      <marker id="head" viewBox="0 0 10 8" refX="9" refY="4" markerWidth="10" markerHeight="8" markerUnits="userSpaceOnUse" orient="auto">
        <path d="M0 0.500L10 4L0 7.500z" fill={RED} stroke="none" />
      </marker>
    </defs>
    <g strokeWidth="3">
      {BOXES.map(([x, y, w, h]) => (
        <rect key={`${x}-${y}`} x={x - 0.5} y={y - 0.5} width={w + 1} height={h + 1} />
      ))}
    </g>
    <g strokeWidth="2">
      {ARROWS.map(([x1, y1, x2, y2]) => (
        <line key={`${x1}-${y1}`} x1={x1} y1={y1} x2={x2} y2={y2} markerEnd="url(#head)" />
      ))}
    </g>
    <g strokeWidth="5" strokeLinecap="round" strokeLinejoin="round">
      <path d="M1447 135L1491 363L1509 335" />
      <path d="M805 551L436 699L446 674" />
      <path d="M1065 377L1574 374L1566 780L1546 1656L1053 1655L1052 1231L577 1232L579 694L1075 691z" />
    </g>
  </Overlay>
);

export default function App() {
  return (
    <>
      <GlobalStyle />
      <Board>
        <DrawingColumn>
          <TopHeading>要打印的图纸</TopHeading>
          <ModelSpace><ModelPlan /></ModelSpace>
          <ResultHeading>彩色图纸打印成黑色图纸</ResultHeading>
          <PaperSpace><PrintedPlan /></PaperSpace>
          <Warning>注意：此处天蓝色样式打印的改错了，<br />不然打印成黑色了。</Warning>
        </DrawingColumn>
        <PrintDialog />
        <FloatingHeading $x={922} $y={10}>打印（Ctlt+P）</FloatingHeading>
        <FloatingHeading $x={1296} $y={38} $size={19}>把图纸的红、蓝等改成黑色</FloatingHeading>
        <StyleEditor x={1075} y={388} selected={4} weight="0.1800" visible={390} inactive />
        <StyleEditor x={1075} y={778} selected={8} weight="0.1300" sample={1} />
        <StyleEditor x={579} y={696} selected={2} weight="0.2000" mnemonics={false} />
        <StyleEditor x={1053} y={1142} selected={4} weight="0.1800" inactive />
        <MarkUp />
      </Board>
    </>
  );
}
